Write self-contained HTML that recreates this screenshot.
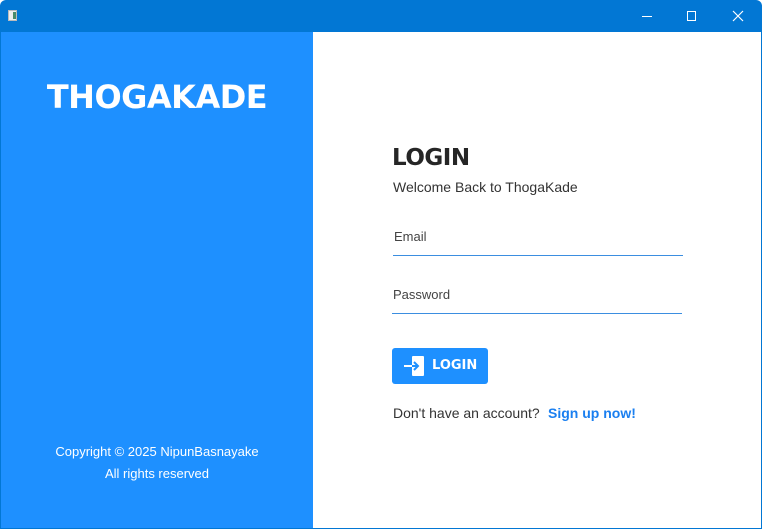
<!DOCTYPE html>
<html><head><meta charset="utf-8"><style>
*{margin:0;padding:0;box-sizing:border-box}
body{width:762px;height:529px;overflow:hidden;background:#fff;font-family:"Liberation Sans",sans-serif;position:relative}
.tb{position:absolute;left:0;top:0;width:762px;height:32px;background:#0277d4;border-radius:6px 6px 0 0}
.frame{position:absolute;left:0;top:32px;width:762px;height:497px;border:1px solid #0277d4;border-top:none}
.left{position:absolute;left:1px;top:32px;width:312px;height:496px;background:#1e90ff}
.abs{position:absolute;white-space:nowrap}
</style></head><body>
<div class="tb">
 <div class="abs" style="left:8px;top:10px;width:9px;height:11px;background:#eee;border:1px solid #bbb"><div style="position:absolute;right:0;top:1px;width:3px;height:7px;background:#4a8a6a"></div></div>
 <div class="abs" style="left:642px;top:16px;width:10px;height:1px;background:#fff"></div>
 <div class="abs" style="left:687px;top:11px;width:9px;height:10px;border:1px solid #fff"></div>
 <svg class="abs" style="left:732px;top:10px" width="12" height="12"><path d="M1 1L11 11M11 1L1 11" stroke="#fff" stroke-width="1.2"/></svg>
</div>
<div class="frame"></div>
<div class="left">
 <div class="abs" style="left:0;width:312px;text-align:center;top:46px;color:#fff;font-weight:bold;font-size:32px;font-family:'DejaVu Sans','Liberation Sans',sans-serif;letter-spacing:-0.5px">THOGAKADE</div>
 <div class="abs" style="left:0;width:312px;text-align:center;top:409px;color:#fff;font-size:13px;line-height:22px">Copyright © 2025 NipunBasnayake<br>All rights reserved</div>
</div>
<div class="abs" style="left:392px;top:145px;font-size:23px;font-weight:bold;color:#262626;font-family:'DejaVu Sans','Liberation Sans',sans-serif;letter-spacing:-0.5px">LOGIN</div>
<div class="abs" style="left:393px;top:179px;font-size:14px;color:#333">Welcome Back to ThogaKade</div>
<div class="abs" style="left:394px;top:229px;font-size:13px;color:#444">Email</div>
<div class="abs" style="left:393px;top:255px;width:290px;height:1px;background:#3b8ee0"></div>
<div class="abs" style="left:393px;top:287px;font-size:13px;color:#444">Password</div>
<div class="abs" style="left:392px;top:313px;width:290px;height:1px;background:#3b8ee0"></div>
<div class="abs" style="left:392px;top:348px;width:96px;height:36px;background:#1e90ff;border-radius:3px">
 <div class="abs" style="left:12px;top:8px;width:20px;height:20px">
  <div class="abs" style="left:8px;top:0;width:12px;height:20px;background:#fff;border-radius:1px"></div>
  <svg class="abs" style="left:0;top:5px" width="20" height="10"><path d="M0 5H8" stroke="#fff" stroke-width="2"/><path d="M8 5H14M10 1L14 5L10 9" stroke="#1e90ff" stroke-width="2" fill="none"/></svg>
 </div>
 <div class="abs" style="left:40px;top:10px;color:#fff;font-weight:bold;font-size:13px;font-family:'DejaVu Sans',sans-serif">LOGIN</div>
</div>
<div class="abs" style="left:393px;top:405px;font-size:14px;color:#333">Don't have an account?</div>
<div class="abs" style="left:548px;top:405px;font-size:14px;color:#1a7ff0;font-weight:bold">Sign up now!</div>
</body></html>
